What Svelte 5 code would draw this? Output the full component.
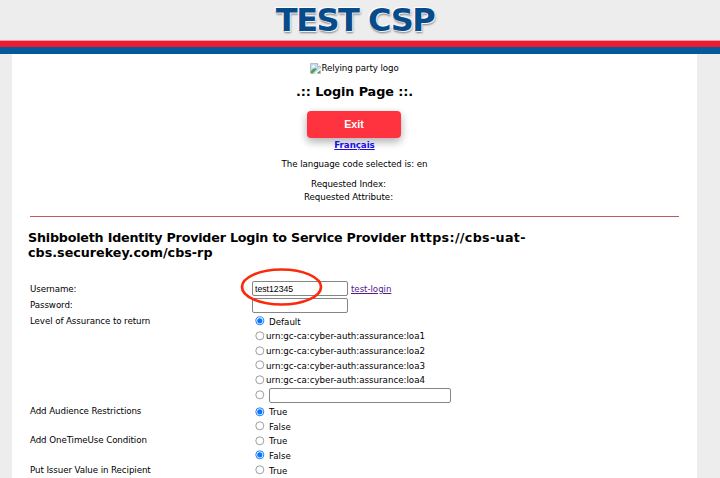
<script>
  const assurance = ['Default', 'urn:gc-ca:cyber-auth:assurance:loa1', 'urn:gc-ca:cyber-auth:assurance:loa2', 'urn:gc-ca:cyber-auth:assurance:loa3', 'urn:gc-ca:cyber-auth:assurance:loa4'];
  const options = [
    { label: 'Add Audience Restrictions', selected: 'True', values: ['True', 'False'] },
    { label: 'Add OneTimeUse Condition', selected: 'False', values: ['True', 'False'] },
    { label: 'Put Issuer Value in Recipient', selected: null, values: ['True'] }
  ];
</script>

{#snippet radio(on)}
  <svg class="radio" viewBox="0 0 10 10" role="radio" aria-checked={on}>
    {#if on}
      <circle cx="4.8" cy="4.8" r="4" fill="#fff" stroke="#1a7dff" stroke-width="1" />
      <circle cx="4.8" cy="4.8" r="2.6" fill="#0875ff" />
    {:else}
      <circle cx="4.8" cy="4.8" r="4" fill="#fff" stroke="#858585" stroke-width=".8" />
    {/if}
  </svg>
{/snippet}

<div class="page">
  <header><span class="brand">TEST CSP</span></header>
  <div class="red"></div>
  <div class="blue"></div>
  <main>
    <section class="intro">
      <div class="logo">
        <svg width="11" height="11" viewBox="0 0 11 11">
          <path d="M.5 .5H7.5L10.5 3.5V10.5H.5Z" fill="#c5d8f5" stroke="#a6a6a6" stroke-width=".7" />
          <path d="M7.5 .5V3.5H10.5" fill="#fff" stroke="#a6a6a6" stroke-width=".7" />
          <ellipse cx="3.5" cy="3.4" rx="1.7" ry="1" fill="#fff" />
          <path d="M1 10V8Q4 4 7 6L3 10Z" fill="#4ba447" />
          <path d="M4 11L11 5V7L6.5 11Z" fill="#fff" />
          <path d="M7 10L10 7.5V10Z" fill="#4ba447" />
        </svg><span>Relying party logo</span>
      </div>
      <h1>.:: Login Page ::.</h1>
      <button>Exit</button>
      <a class="lang" href="#fr">Français</a>
      <p class="code">The language code selected is: en</p>
      <p class="index">Requested Index:</p>
      <p class="attr">Requested Attribute:</p>
    </section>
    <hr />
    <h2>Shibboleth Identity Provider Login to Service Provider <span class="url">https://cbs-uat-</span><br /><span class="host">cbs.securekey.com/cbs-rp</span></h2>
    <form>
      <div class="row user">
        <span class="label">Username:</span>
        <div class="field">
          <input value="test12345" />
          <a href="#test">test-login</a>
          <svg class="ring" width="84" height="42" viewBox="0 0 84 42"><ellipse cx="41.5" cy="21" rx="39.5" ry="17.5" fill="none" stroke="#fa2a0c" stroke-width="2.7" /></svg>
        </div>
      </div>
      <div class="row pass">
        <span class="label">Password:</span>
        <div class="field"><input type="password" /></div>
      </div>
      <div class="row">
        <span class="label">Level of Assurance to return</span>
        <div class="choices">
          {#each assurance as text, i}
            <div class="choice" class:urn={i > 0}>{@render radio(i === 0)}<span>{text}</span></div>
          {/each}
          <div class="choice other">{@render radio(false)}<input /></div>
        </div>
      </div>
      {#each options as option}
        <div class="row">
          <span class="label">{option.label}</span>
          <div class="choices">
            {#each option.values as value}
              <div class="choice">{@render radio(option.selected === value)}<span>{value}</span></div>
            {/each}
          </div>
        </div>
      {/each}
    </form>
  </main>
</div>

<style>
  :global(body) { margin: 0; overflow: hidden; }
  .page { width: 720px; height: 478px; overflow: hidden; background: #ededed; color: #000; font: 8.7px/14px Verdana, "DejaVu Sans", sans-serif; letter-spacing: -.06px; }
  header { box-sizing: border-box; height: 41px; border-bottom: 1px solid #eb9da3; display: flex; justify-content: center; }
  .brand { font: bold 32px/40px "DejaVu Sans", sans-serif; color: #084b8a; letter-spacing: -1.5px; text-shadow: -1px -1px 0 #fff, 1px 1px 1px #fff, 1px 2px 2px #777; margin-left: -10px; white-space: nowrap; }
  .red { height: 6px; background: #ee1b2e; }
  .blue { height: 7px; background: #005a9c; }
  main { box-sizing: border-box; width: 685px; height: 424px; margin-left: 12px; background: #fff; overflow: hidden; }
  .intro { display: flex; flex-direction: column; align-items: center; height: 162px; }
  .logo { display: flex; align-items: center; height: 14px; margin-top: 7px; }
  .logo span { letter-spacing: -.1px; }
  h1 { margin: 8px 0 0; font-size: 12.8px; line-height: 18px; letter-spacing: -.1px; white-space: pre; }
  button { width: 94px; height: 27px; margin: 10px 1px 0 0; padding: 0; border: 0; border-radius: 4px; background: #ff3340; color: #fff; font: bold 10.7px/27px "Liberation Sans", Arial, sans-serif; box-shadow: 0 4px 8px rgba(0, 0, 0, .22), 0 3px 10px rgba(0, 0, 0, .12); }
  a { color: #551a8b; }
  .lang { color: #1a0de8; font-weight: bold; line-height: 14px; }
  p { margin: 0; }
  .code { margin-top: 5px; letter-spacing: -.09px; }
  .index { margin: 6px 12px 0 0; }
  .attr { margin: -1px 12px 0 0; }
  hr { width: 649px; height: 1px; margin: 0 0 0 18px; border: 0; background: #bd5a5a; }
  h2 { margin: 13px 0 0 16px; font-size: 12.7px; line-height: 15px; letter-spacing: -.2px; white-space: nowrap; }
  .url { letter-spacing: .33px; }
  .host { letter-spacing: .02px; }
  form { margin: 20px 0 0 18px; }
  .row { display: flex; }
  .label { width: 222px; line-height: 15px; letter-spacing: -.09px; }
  .field, .choice { display: flex; align-items: center; }
  .user { height: 17px; }
  .user .label { line-height: 18px; }
  .pass { height: 17px; }
  .pass .label { line-height: 17px; }
  .field { position: relative; gap: 3px; height: 17px; }
  .pass .field { height: 16px; }
  .user .field { z-index: 1; }
  input { box-sizing: border-box; width: 96px; height: 15px; margin: 0; padding: 0 2px; border: 1px solid #858585; border-radius: 2px; background: #fff; color: #000; font: 8.7px "Liberation Sans", Arial, sans-serif; outline: 0; }
  .ring { position: absolute; left: -12px; top: -14px; }
  .choice { height: 14.65px; gap: 4px; padding-left: 3px; letter-spacing: -.01px; }
  .urn { gap: 1px; }
  .other { height: 17px; }
  .other input { width: 182px; }
  .other .radio { margin-top: -2px; }
  .radio { width: 10px; height: 10px; flex: none; }
  .choice span { padding-top: 1px; }
</style>
